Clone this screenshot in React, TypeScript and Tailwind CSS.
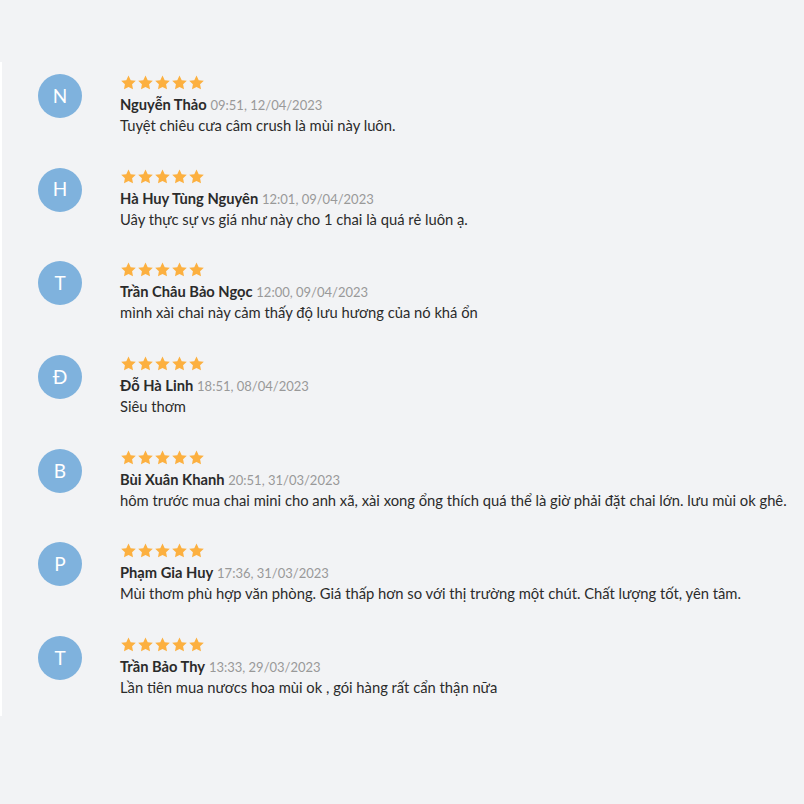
import React from "react";

const reviews = [
  { l: "N", name: "Nguyễn Thảo", date: "09:51, 12/04/2023", text: "Tuyệt chiêu cưa câm crush là mùi này luôn." },
  { l: "H", name: "Hà Huy Tùng Nguyên", date: "12:01, 09/04/2023", text: "Uây thực sự vs giá như này cho 1 chai là quá rẻ luôn ạ." },
  { l: "T", name: "Trần Châu Bảo Ngọc", date: "12:00, 09/04/2023", text: "mình xài chai này cảm thấy độ lưu hương của nó khá ổn" },
  { l: "Đ", name: "Đỗ Hà Linh", date: "18:51, 08/04/2023", text: "Siêu thơm" },
  { l: "B", name: "Bùi Xuân Khanh", date: "20:51, 31/03/2023", text: "hôm trước mua chai mini cho anh xã, xài xong ổng thích quá thể là giờ phải đặt chai lớn. lưu mùi ok ghê." },
  { l: "P", name: "Phạm Gia Huy", date: "17:36, 31/03/2023", text: "Mùi thơm phù hợp văn phòng. Giá thấp hơn so với thị trường một chút. Chất lượng tốt, yên tâm." },
  { l: "T", name: "Trần Bảo Thy", date: "13:33, 29/03/2023", text: "Lần tiên mua nươcs hoa mùi ok , gói hàng rất cẩn thận nữa" },
];

function Star() {
  return (
    <svg width="17" height="15" viewBox="-1 0 26 23">
      <path d="M12 0.8l3.4 7.1 7.8 1-5.7 5.4 1.4 7.7L12 18.3l-6.9 3.7 1.4-7.7L0.8 8.9l7.8-1z" fill="#fcb040" />
    </svg>
  );
}

export default function App() {
  return (
    <div className="w-[804px] h-[804px] bg-[#f2f3f5] pt-[62px]" style={{ fontFamily: "Lato, 'Noto Sans', sans-serif" }}>
      <div className="h-[654px] w-[800px] border-l-2 border-white pt-[12px]">
        {reviews.map((r, i) => (
          <div key={i} className="flex h-[93.7px] pl-[36px]">
            <div className="w-[44px] h-[44px] rounded-full bg-[#7fb2dd] flex items-center justify-center text-white text-[19px] shrink-0">
              {r.l}
            </div>
            <div className="ml-[38px] pt-[1px]">
              <div className="flex h-[15px]">
                <Star /><Star /><Star /><Star /><Star />
              </div>
              <div className="mt-[4px] leading-[20px] text-[14.7px] text-[#2b2b2b]">
                <span className="font-bold">{r.name}</span>{" "}
                <span className="text-[13px] text-[#999]">{r.date}</span>
              </div>
              <div className="leading-[21px] text-[14.75px] text-[#2b2b2b]">{r.text}</div>
            </div>
          </div>
        ))}
      </div>
    </div>
  );
}
